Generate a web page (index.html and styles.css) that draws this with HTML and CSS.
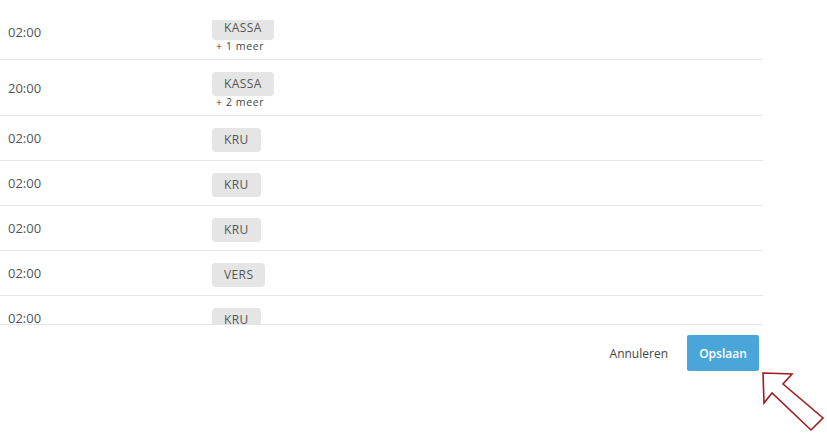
FILE: index.html
```html
<!DOCTYPE html>
<html lang="nl">
<head>
  <meta charset="UTF-8" />
  <meta name="viewport" content="width=device-width, initial-scale=1.0" />
  <title>Diensten</title>
  <link rel="stylesheet" href="styles.css">
</head>
<body>

<div class="panel">
  <!-- Scrolled list of shifts -->
  <div class="shift-list">
    <div class="shift-inner">
      <div class="shift-row">
        <span class="time">02:00</span>
        <div class="tags"><span class="tag">KASSA</span><span class="more">+ 1 meer</span></div>
      </div>
      <div class="shift-row">
        <span class="time">20:00</span>
        <div class="tags"><span class="tag">KASSA</span><span class="more">+ 2 meer</span></div>
      </div>
      <div class="shift-row">
        <span class="time">02:00</span>
        <div class="tags"><span class="tag">KRU</span></div>
      </div>
      <div class="shift-row">
        <span class="time">02:00</span>
        <div class="tags"><span class="tag">KRU</span></div>
      </div>
      <div class="shift-row">
        <span class="time">02:00</span>
        <div class="tags"><span class="tag">KRU</span></div>
      </div>
      <div class="shift-row">
        <span class="time">02:00</span>
        <div class="tags"><span class="tag">VERS</span></div>
      </div>
      <div class="shift-row">
        <span class="time">02:00</span>
        <div class="tags"><span class="tag">KRU</span></div>
      </div>
    </div>
  </div>

  <div class="footer">
    <button class="btn-link">Annuleren</button>
    <button class="btn-primary">Opslaan</button>
  </div>
</div>

<!-- annotation arrow -->
<svg class="pointer" width="827" height="436" viewBox="0 0 827 436">
  <polygon points="763,373 792,374 783,384 823,418 811,430 772,393 764,403"
           fill="#fff" stroke="#9c1d22" stroke-width="1.6" stroke-linejoin="miter"/>
</svg>

</body>
</html>
```

FILE: styles.css
```css
body {
  margin: 0;
  background: #fff;
  font-family: "Open Sans", "Noto Sans", sans-serif;
  color: #555;
}

.panel {
  width: 763px;
}

/* List */
.shift-list {
  margin-top: 20px;
  height: 304px;
  overflow: hidden;
  border-bottom: 1px solid #e6e6e6;
}

.shift-inner {
  margin-top: -16px;
}

.shift-row {
  display: grid;
  grid-template-columns: 204px auto;
  padding: 12px 0 8px 8px;
  border-bottom: 1px solid #e6e6e6;
}

.shift-row .time {
  align-self: center;
  margin-bottom: 4px;
  font-size: 13px;
  color: #555;
}

.tags {
  display: flex;
  flex-direction: column;
  align-items: flex-start;
}

.tag {
  display: inline-block;
  height: 24px;
  line-height: 24px;
  padding: 0 12px;
  background: #e5e5e5;
  border-radius: 4px;
  font-size: 12px;
  letter-spacing: 0.4px;
  color: #555;
}

.more {
  height: 12px;
  line-height: 12px;
  margin-left: 4px;
  margin-bottom: -1px;
  font-size: 10.5px;
  letter-spacing: 0.6px;
  color: #444;
}

/* Footer */
.footer {
  display: flex;
  justify-content: flex-end;
  align-items: center;
  gap: 19px;
  padding: 10px 4px 0 0;
}

.btn-link {
  background: none;
  border: none;
  padding: 0;
  font-family: inherit;
  font-size: 12px;
  color: #444;
}

.btn-primary {
  width: 72px;
  height: 36px;
  border: none;
  border-radius: 2px;
  background: #4aa5d8;
  color: #fff;
  font-family: inherit;
  font-size: 12px;
  font-weight: 600;
}

.pointer {
  position: absolute;
  top: 0;
  left: 0;
  pointer-events: none;
}
```
